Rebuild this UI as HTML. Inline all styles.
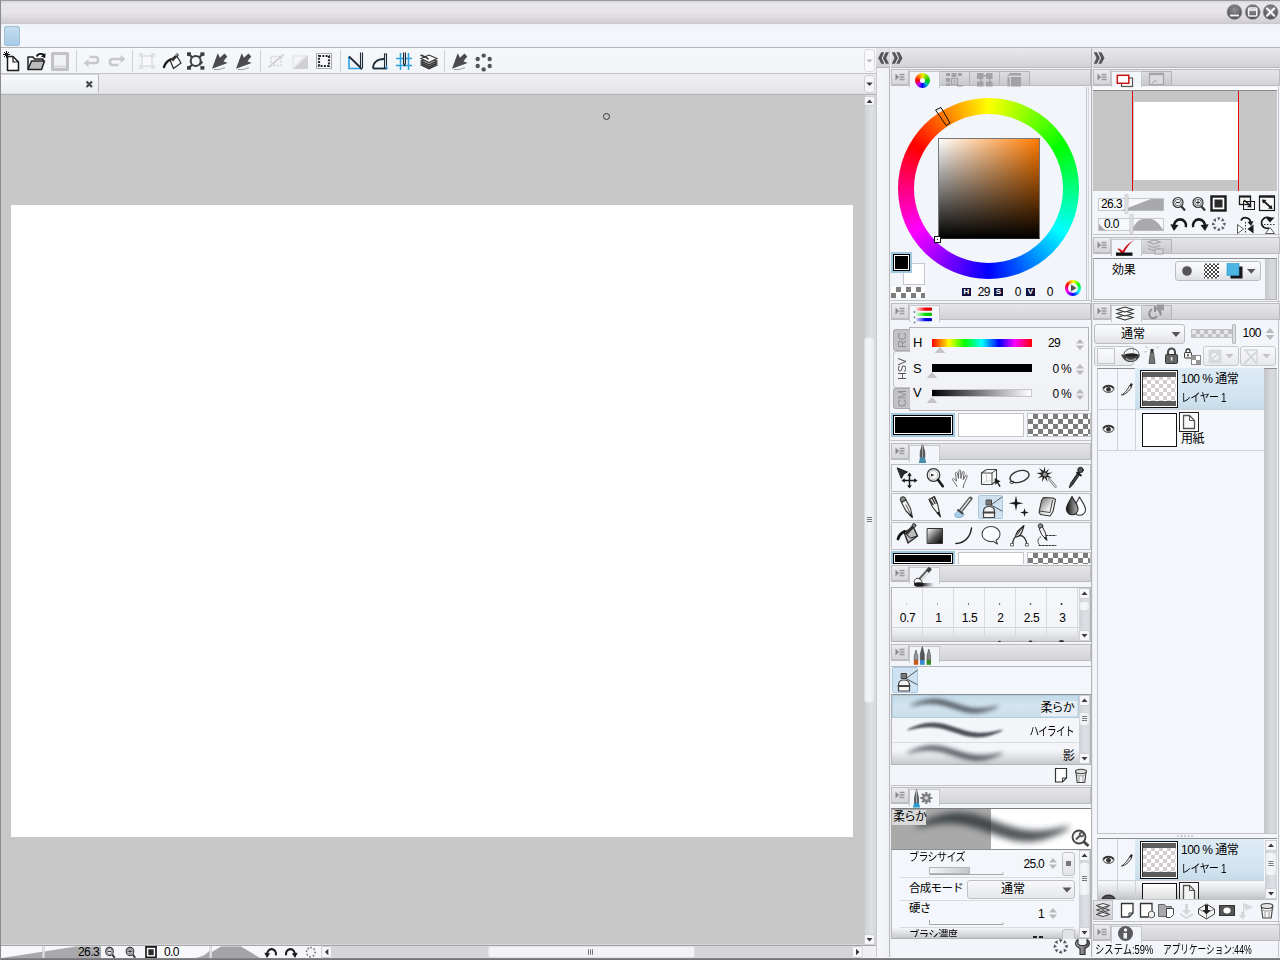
<!DOCTYPE html>
<html lang="ja">
<head>
<meta charset="utf-8">
<title>CLIP STUDIO PAINT</title>
<style>
*{box-sizing:border-box;margin:0;padding:0}
html,body{width:1280px;height:960px;overflow:hidden;background:#f2f5fa}
body{position:relative;font-family:"Liberation Sans","Noto Sans CJK JP",sans-serif;font-size:12px;color:#111;line-height:1}
.a{position:absolute}
#title{left:0;top:0;width:1280px;height:24px;background:linear-gradient(#d9d7db 0,#e9e7eb 3px,#e6e4e8 12px,#d2d0d4 21px,#c6c4c8 24px);border-top:1px solid #9a9a9e}
#menu{left:0;top:24px;width:1280px;height:23px;background:linear-gradient(#eef1f6,#f5f8fc 40%,#f1f4f9)}
#menuline{left:0;top:47px;width:1280px;height:1px;background:#b4b4b8}
#toolbar{left:0;top:48px;width:876px;height:25px;background:linear-gradient(#f6f8fb,#f1f4f8)}
#toolline{left:0;top:73px;width:876px;height:1px;background:#c4c4c8}
#tabrow{left:0;top:74px;width:876px;height:19px;background:linear-gradient(#eeeef1,#e6e6ea)}
#doctab{left:0;top:74px;width:99px;height:19px;background:linear-gradient(#f7f9fc,#e9ecf0);border-right:1px solid #bdbdc2;border-top:1px solid #d4d4d8}
#tabline{left:0;top:93px;width:876px;height:2px;background:linear-gradient(#f4f4f6,#9c9ca0)}
#canvas{left:1px;top:95px;width:864px;height:849px;background:#c8c8c8}
#paper{left:11px;top:205px;width:842px;height:632px;background:#fff}
#lborder{left:0;top:0;width:1px;height:960px;background:#8c8c90}
#vscroll{left:865px;top:95px;width:11px;height:849px;background:linear-gradient(90deg,#cfd4d9,#dde1e6 60%,#d4d8dd)}
#status{left:1px;top:944px;width:875px;height:13px;background:#d6d6da}
#bottomline{left:0;top:958px;width:1280px;height:2px;background:linear-gradient(#8a8a8e,#6e6e72)}
.dockhead{height:20px;top:48px;background:linear-gradient(#e9e8eb,#dcdbde 60%,#d2d1d4);border-bottom:1px solid #b9b9bd}
.tabbar{height:17px;background:linear-gradient(#e6e5e8,#d3d2d5);border:1px solid #bcbcc0}
.tab{background:#f2f5fa;border:1px solid #c9c9cd;border-bottom:none;margin-top:2px}
.itab{margin-top:1px;height:14px;background:linear-gradient(#dddce0,#c9c8cc);border:1px solid #b4b4b8;border-bottom:none}
.mbtn{height:16px;width:18px;background:linear-gradient(#ebeaed,#d6d5d8);border:1px solid #bdbdc1}
.panel{background:#f2f5fa}

.chk{background:conic-gradient(#7c7c7c 25%,#fff 0 50%,#7c7c7c 0 75%,#fff 0);background-size:10px 10px}
.hb{top:288px;width:9px;height:8px;background:#10103c;color:#fff;font-size:8px;font-weight:bold;line-height:8px;text-align:center}
.hv{top:286px;height:12px;font-size:12px;line-height:12px;text-align:right;letter-spacing:-0.500px;color:#000}

.vt{width:16px;writing-mode:vertical-rl;transform:rotate(180deg);font-size:11px;line-height:16px;text-align:center;letter-spacing:-0.300px}
.sl{left:913px;width:10px;font-size:13px;line-height:14px;color:#000}
.sv{font-size:12px;line-height:14px;text-align:right;color:#000;letter-spacing:-0.700px}
.sw{background:#000;border:2px solid #9fc7de;box-shadow:inset 0 0 0 1px #000,inset 0 0 0 2px #fff}
.tb{left:891px;width:200px;height:28px;background:#f3f6fa;border:1px solid #bebec2}

.sbb{width:11px;height:11px;background:#f6f7f9;border:1px solid #d0d0d4;border-radius:2px}
.bs{top:611px;width:31px;font-size:12px;line-height:14px;text-align:center;color:#000;letter-spacing:-0.400px}
.st{left:960px;width:114px;height:15px;font-size:12px;line-height:15px;text-align:right;color:#000;letter-spacing:-0.800px}
.pl{left:909px;font-size:11.500px;line-height:13px;color:#000;letter-spacing:-0.700px;white-space:nowrap}

.lt{font-size:12px;line-height:14px;color:#000;letter-spacing:-0.500px;white-space:nowrap}
.lchk{background-color:#fff;background-image:linear-gradient(45deg,#d3cdcd 25%,transparent 25%,transparent 75%,#d3cdcd 75%),linear-gradient(45deg,#d3cdcd 25%,transparent 25%,transparent 75%,#d3cdcd 75%);background-size:8px 8px;background-position:0 0,4px 4px}
.ochk{background-color:#e8e8ea;background-image:linear-gradient(45deg,#c2c2c5 25%,transparent 25%,transparent 75%,#c2c2c5 75%),linear-gradient(45deg,#c2c2c5 25%,transparent 25%,transparent 75%,#c2c2c5 75%);background-size:8px 8px;background-position:0 0,4px 4px;border:1px solid #c0c0c4}
.stx{top:943px;font-size:12px;line-height:14px;color:#000;white-space:nowrap;transform-origin:0 50%}
</style>
</head>
<body>
<!-- ===== window chrome ===== -->
<div id="title" class="a"></div>
<div id="menu" class="a"></div>
<div id="menuline" class="a"></div>
<div id="toolbar" class="a"></div>
<div id="toolline" class="a"></div>
<div id="tabrow" class="a"></div>
<div id="doctab" class="a"></div>
<div id="tabline" class="a"></div>
<div id="canvas" class="a"></div>
<div id="paper" class="a"></div>
<div id="vscroll" class="a"></div>
<div id="status" class="a"></div>

<!-- window buttons -->
<svg class="a" style="left:1224px;top:2px" width="56" height="22" viewBox="0 0 56 22">
<defs><radialGradient id="wb" cx="50%" cy="35%" r="65%"><stop offset="0" stop-color="#909094"/><stop offset="1" stop-color="#4e4e52"/></radialGradient></defs>
<circle cx="10.5" cy="10" r="7.6" fill="url(#wb)" stroke="#a8a8ac" stroke-width="0.8"/>
<circle cx="28.7" cy="10" r="7.6" fill="url(#wb)" stroke="#a8a8ac" stroke-width="0.8"/>
<circle cx="46.6" cy="10" r="7.6" fill="url(#wb)" stroke="#a8a8ac" stroke-width="0.8"/>
<path d="M6 13.5h9" stroke="#f4f4f6" stroke-width="1.8"/>
<rect x="24.6" y="6" width="8.2" height="8" rx="1" fill="none" stroke="#f4f4f6" stroke-width="1.6"/><path d="M25 8h7.5" stroke="#f4f4f6" stroke-width="1.6"/>
<path d="M43 6.5l7.2 7.2M50.2 6.5l-7.2 7.2" stroke="#f4f4f6" stroke-width="2.2" stroke-linecap="round"/>
</svg>
<!-- menu bar app box -->
<div class="a" style="left:4px;top:26px;width:16px;height:20px;border-radius:2px;background:linear-gradient(#c4dcef,#a9cbe6);border:1px solid #9fc0da"></div>
<!-- toolbar icons -->
<svg class="a" style="left:0;top:48px" width="500" height="26" viewBox="0 0 500 26">
<g fill="none" stroke-linejoin="round">
<!-- new -->
<path d="M7.5 8.5h5.5l5.5 5.5v8.5h-11z" fill="#fff" stroke="#1a1a1a" stroke-width="1.5"/><path d="M13 8.5v5.5h5.5" stroke="#1a1a1a" stroke-width="1.2"/>
<path d="M3 6.5h7M6.5 3v7M4 4l5 5M9 4l-5 5" stroke="#1a1a1a" stroke-width="1"/>
<!-- open -->
<path d="M28 21.5v-12.5h5l1.5 2h8.5v2.5" stroke="#222" stroke-width="1.5"/><path d="M28 21.5l3.5-8.5h13l-3 8.5z" fill="#bdbdbd" stroke="#222" stroke-width="1.5"/>
<path d="M36.5 8.5c1.5-3 5-3.5 7.500-1.500" stroke="#111" stroke-width="1.8"/><path d="M45.5 5l-.3 5-4.200-1.500z" fill="#111"/>
<!-- save (disabled) -->
<rect x="52.500" y="5.500" width="15" height="16" fill="#f0f2f5" stroke="#c2c2c4" stroke-width="3"/><path d="M54 18.500h12" stroke="#d8d8da" stroke-width="2"/>
<!-- sep -->
<path d="M76.500 2v22M132.500 2v22M260.500 2v22M340.500 2v22M444.500 2v22" stroke="#cfcfd3" stroke-width="1"/>
<!-- undo / redo disabled -->
<path d="M86 15h9.500c3.500 0 3.500-6 0-6h-6" stroke="#c9c9cc" stroke-width="2.600"/><path d="M83.500 15l5-4v8z" fill="#c9c9cc"/>
<path d="M122 11h-9.500c-3.500 0-3.500 6 0 6h6" stroke="#c9c9cc" stroke-width="2.600"/><path d="M125.500 11l-5-4v8z" fill="#c9c9cc"/>
<!-- transform disabled -->
<rect x="142" y="8" width="10" height="10" fill="#f8f9fb" stroke="#dcdcdf" stroke-width="1.500"/><g fill="#e0e0e3"><rect x="139" y="5" width="4" height="4"/><rect x="151" y="5" width="4" height="4"/><rect x="139" y="17" width="4" height="4"/><rect x="151" y="17" width="4" height="4"/></g>
<!-- fill bucket -->
<path d="M170 12l6.500-4.500 4.500 7.500-7.500 5.500z" fill="#fafbfc" stroke="#333" stroke-width="1.300"/><path d="M172 12.500l6-6.500" stroke="#333" stroke-width="2.600"/><path d="M175.500 8l2-2" stroke="#e8e8e8" stroke-width="1"/>
<path d="M170.500 11.500c-3 1.500-5.500 3.500-6.500 7.500" stroke="#1a1a1a" stroke-width="2.400" stroke-linecap="round"/>
<!-- expand -->
<circle cx="195.700" cy="13" r="5" stroke="#3e3e40" stroke-width="2"/><path d="M192 9.300l-3-3M199.400 9.300l3-3M192 16.700l-3 3M199.400 16.700l3-3" stroke="#3e3e40" stroke-width="2.200"/>
<g fill="#3e3e40" stroke="none"><rect x="187" y="4.300" width="4" height="3.600"/><rect x="200.400" y="4.300" width="4" height="3.600"/><rect x="187" y="18.100" width="4" height="3.600"/><rect x="200.400" y="18.100" width="4" height="3.600"/></g>
</g>
<!-- dart icons -->
<g id="dart" fill="#4c4c4e"><path d="M212 20.700l5.700-15.400 2.300 4.500 4.500-4.200 2.800 2.800-3.900 4.800 4.200 1.700z"/><path d="M214 21.500c4 .5 8-.5 11-2" stroke="#9a9a9c" stroke-width="1" fill="none"/></g>
<use href="#dart" x="24"/>
<use href="#dart" x="240"/>
<g fill="none">
<!-- deselect disabled -->
<rect x="271" y="8.500" width="10" height="9" stroke="#d2d2d5" stroke-width="1.400" stroke-dasharray="2 1.500"/><path d="M268.500 19.500l15-13" stroke="#d2d2d5" stroke-width="2"/>
<!-- invert disabled -->
<path d="M293 21h15v-14z" fill="#d0d0d3"/><path d="M293 8h14" stroke="#dcdcde" stroke-width="1"/><path d="M293 8v12" stroke="#dcdcde" stroke-width="1"/><path d="M294 19l12-11" stroke="#e6e6e8" stroke-width="1.500"/>
<!-- select all -->
<rect x="316.500" y="5.500" width="15" height="15" fill="#fafbfc" stroke="#aaa" stroke-width="1"/><rect x="319" y="8" width="10" height="10" stroke="#2a2a2c" stroke-width="2.200" stroke-dasharray="2 1.300"/>
<!-- ruler N -->
<path d="M349 8.500v12h13" stroke="#2aa0de" stroke-width="1.600"/><path d="M349 8.500l12.500 12" stroke="#1c2a3a" stroke-width="1.800"/><path d="M360.500 4.500v15l1 1.500 1-1.500v-15" stroke="#1c2a3a" stroke-width="1.100" fill="#e8e8ea"/>
<!-- ruler D -->
<path d="M373 20.500c0-6 4.500-9.500 11-9.500" stroke="#1c2a3a" stroke-width="1.800"/><path d="M373 20.500h14" stroke="#1c2a3a" stroke-width="1.800"/><path d="M384.500 6v13.500l1 1 1-1v-13.500z" stroke="#1c2a3a" stroke-width="1.100" fill="#e8e8ea"/><path d="M386 17l2.500 3.500h-3z" fill="#2aa0de"/>
<!-- grid -->
<path d="M396 10.500h16M396 17.500h16M400.500 5v17M408.500 5v17" stroke="#2aa0de" stroke-width="1.500"/><path d="M403.500 4.500v11l1 2 1-2v-11" stroke="#1c2a3a" stroke-width="1.100" fill="#d8d8da"/>
<!-- layers -->
<g stroke="#333" stroke-width="1.100"><path d="M421 17l8 4 8-4-8-3z" fill="#555"/><path d="M421 15l8 4 8-4-8-3z" fill="#777"/><path d="M421 13l8 4 8-4-8-3z" fill="#999"/><path d="M421 10.500l8 4 8-4-8-3.500z" fill="#fafafa"/><path d="M420.500 7l6 2.500 2 2" stroke-width="1.500"/></g>
</g>
<!-- dots -->
<g fill="#555557"><circle cx="483.700" cy="7.600" r="2.200"/><circle cx="489.700" cy="11" r="2.200"/><circle cx="489.700" cy="18" r="2.200"/><circle cx="483.700" cy="21.400" r="2.200"/><circle cx="477.700" cy="18" r="2.200"/><circle cx="477.700" cy="11" r="2.200"/></g>
</svg>
<!-- toolbar overflow / tab list / scroll buttons -->
<div class="a" style="left:864px;top:49px;width:11px;height:23px;background:#f8f9fb;border:1px solid #dcdce0;border-radius:3px"></div>
<svg class="a" style="left:864px;top:49px" width="11" height="23"><path d="M2.500 10.500h6l-3 3z" fill="#b4b4b8"/></svg>
<div class="a" style="left:864px;top:75px;width:11px;height:18px;background:#f4f5f8;border:1px solid #d0d0d4;border-radius:3px"></div>
<svg class="a" style="left:864px;top:75px" width="11" height="18"><path d="M2.300 7.500h6.400l-3.200 3.600z" fill="#3a3a3c"/></svg>
<div class="a" style="left:864px;top:96px;width:11px;height:10px;background:#f6f7f9;border:1px solid #d0d0d4;border-radius:2px"></div>
<svg class="a" style="left:864px;top:96px" width="11" height="10"><path d="M2.500 7h6l-3-3.400z" fill="#3a3a3c"/></svg>
<div class="a" style="left:864px;top:934px;width:11px;height:11px;background:#f6f7f9;border:1px solid #d0d0d4;border-radius:2px"></div>
<svg class="a" style="left:864px;top:934px" width="11" height="11"><path d="M2.500 4h6l-3 3.400z" fill="#3a3a3c"/></svg>
<div class="a" style="left:864px;top:337px;width:11px;height:366px;background:linear-gradient(90deg,#e9ecf0,#f3f5f8 50%,#e6e9ed);border:1px solid #d9dce0;border-radius:3px"></div>
<svg class="a" style="left:864px;top:514px" width="11" height="12"><path d="M3 3.500h5M3 5.500h5M3 7.500h5" stroke="#77777a" stroke-width="1"/></svg>
<!-- doc tab close -->
<svg class="a" style="left:84px;top:79px" width="11" height="11"><path d="M2.500 2.500l5.500 5.500M8 2.500l-5.500 5.500" stroke="#4a4a4c" stroke-width="2.200"/></svg>
<!-- canvas cursor -->
<svg class="a" style="left:601px;top:111px" width="11" height="11"><circle cx="5.500" cy="5.500" r="3" fill="none" stroke="#333" stroke-width="1"/></svg>

<!-- status bar -->
<div class="a" style="left:1px;top:945px;width:875px;height:1px;background:#a4a4a8"></div>
<div class="a" style="left:1px;top:946px;width:863px;height:12px;background:#f4f6f9"></div>
<svg class="a" style="left:0;top:946px" width="864" height="12" viewBox="0 0 864 11" preserveAspectRatio="none">
<rect x="2" y="0" width="99" height="11" fill="#f6f8fa"/>
<path d="M2 11L76 0.500H101V11z" fill="#a9a9ab"/>
<rect x="42.500" y="0" width="2" height="11" fill="#e4e6e9" stroke="#c4c4c8" stroke-width="0.500"/>
<rect x="161" y="0" width="49" height="11" fill="#f6f8fa"/>
<path d="M193 11C203 11 208 6 210 4v7z" fill="#a9a9ab"/>
<rect x="212" y="0" width="48" height="11" fill="#f6f8fa"/>
<path d="M212 11V5.500L221 0.500H241L260 11z" fill="#a4a4a6"/>
<rect x="209.800" y="0" width="2" height="11" fill="#e4e6e9" stroke="#c4c4c8" stroke-width="0.500"/>
<g fill="none" stroke="#333" stroke-width="1.100"><circle cx="109.500" cy="5" r="3.800"/><circle cx="109.500" cy="5" r="2.600" stroke-width="0.600"/><path d="M107.800 5h3.400"/><path d="M112.300 8l2.500 2.800" stroke-width="1.800"/>
<circle cx="130" cy="5" r="3.800"/><circle cx="130" cy="5" r="2.600" stroke-width="0.600"/><path d="M128.200 5h3.600M130 3.200v3.600"/><path d="M132.800 8l2.500 2.800" stroke-width="1.800"/></g>
<rect x="146" y="0.800" width="10" height="9.700" fill="#fff" stroke="#1a1a1a" stroke-width="1.700"/><rect x="148.300" y="3" width="5.400" height="5.400" fill="#2a2a2c"/>
<g fill="none" stroke="#1a1a1a" stroke-width="2"><path d="M267.300 8.200A4.400 4.400 0 1 1 275.800 8.600"/><path d="M294.700 8.200A4.400 4.400 0 1 0 286.200 8.600"/></g>
<path d="M264.300 6.300l5.800 .5-3.200 4.200z" fill="#1a1a1a"/><path d="M297.700 6.300l-5.800 .5 3.200 4.200z" fill="#1a1a1a"/>
<g fill="#777"><circle cx="311" cy="1.500" r=".9"/><circle cx="314.200" cy="3" r=".9"/><circle cx="315.200" cy="6" r=".9"/><circle cx="313.500" cy="9" r=".9"/><circle cx="310" cy="9.800" r=".9"/><circle cx="307.300" cy="8" r=".9"/><circle cx="306.600" cy="4.800" r=".9"/><circle cx="308.200" cy="2.300" r=".9"/></g>
<rect x="332" y="0" width="520" height="11" fill="#d5d5d9"/>
<rect x="321.500" y="0.500" width="10" height="10" rx="2" fill="#f6f7f9" stroke="#d0d0d4"/><path d="M328.300 2.500v6l-3.400-3z" fill="#3a3a3c"/>
<rect x="852.500" y="0.500" width="10" height="10" rx="2" fill="#f6f7f9" stroke="#d0d0d4"/><path d="M856 2.500v6l3.400-3z" fill="#3a3a3c"/>
<rect x="488.500" y="0.500" width="206" height="10" rx="2.500" fill="#f1f3f6" stroke="#dfe1e4"/>
<path d="M588.500 3v5M590.500 3v5M592.500 3v5" stroke="#77777a" stroke-width="1"/>
</svg>
<div class="a" style="left:60px;top:946px;width:39px;height:11px;font-size:12px;letter-spacing:-0.600px;text-align:right;line-height:12px;color:#000">26.3</div>
<div class="a" style="left:164px;top:946px;width:30px;height:11px;font-size:12px;letter-spacing:-0.600px;line-height:12px;color:#000">0.0</div>
<div class="a" style="left:864px;top:946px;width:12px;height:12px;background:#eef0f4"></div>


<!-- dock frame -->
<div class="a" style="left:876px;top:48px;width:404px;height:909px;background:#f2f5fa"></div>
<div class="a dockhead" style="left:876px;width:404px"></div>
<div class="a" style="left:876px;top:68px;width:1px;height:889px;background:#c9c9cd"></div>
<div class="a" style="left:877px;top:68px;width:12px;height:889px;background:linear-gradient(90deg,#f4f6fa,#eef0f5)"></div>
<div class="a" style="left:889px;top:68px;width:1px;height:889px;background:#b9b9bd"></div><div class="a" style="left:889px;top:48px;width:1px;height:19px;background:#d0d0d4"></div>
<div class="a" style="left:890px;top:48px;width:1px;height:909px;background:#eeeff3"></div>
<div class="a" style="left:1091px;top:48px;width:1px;height:909px;background:#b4b4b8"></div>
<div class="a" style="left:1092px;top:48px;width:1px;height:909px;background:#e8e9ed"></div>
<svg class="a" style="left:876px;top:48px" width="404" height="20" viewBox="0 0 404 20">
<g fill="#555558" transform="translate(0 1) scale(1 .9)"><path d="M5.300 3.500h3l-2.700 6.500 2.700 6.500h-3l-3.100-6.500z"/><path d="M9.900 3.500h3l-2.700 6.500 2.700 6.500h-3l-3.100-6.500z"/>
<path d="M15.800 3.500h3l3.100 6.500-3.100 6.500h-3l2.700-6.500z"/><path d="M20.400 3.500h3l3.100 6.500-3.100 6.500h-3l2.700-6.500z"/>
<path d="M217.800 3.500h3l3.100 6.500-3.100 6.500h-3l2.700-6.500z"/><path d="M222.400 3.500h3l3.100 6.500-3.100 6.500h-3l2.700-6.500z"/></g>
</svg>

<!-- ===== middle column ===== -->
<!-- color wheel panel --><div class="a tabbar" style="left:891px;top:69px;width:200px"></div><div class="a mbtn" style="left:891px;top:69px"></div><svg class="a" style="left:891px;top:69px" width="18" height="17"><path d="M4.500 4.500v7l3.500-3.500z" fill="#8a8a8e"/><path d="M8.500 5.500h5M8.500 8h5M8.500 10.500h5" stroke="#9a9a9e" stroke-width="1.300"/></svg><div class="a itab" style="left:939px;top:70px;width:31px"></div><div class="a itab" style="left:969px;top:70px;width:31px"></div><div class="a itab" style="left:999px;top:70px;width:31px"></div><div class="a tab" style="left:909px;top:69px;width:31px;height:17px"></div>
<div class="a" style="left:1086px;top:87px;width:1px;height:213px;background:#c4c4c8"></div>
<div class="a" style="left:1088px;top:87px;width:1px;height:213px;background:#d4d4d8"></div>
<div class="a" style="left:891px;top:300px;width:200px;height:1px;background:#c2c2c6"></div>
<div class="a" style="left:898px;top:98px;width:181px;height:181px;border-radius:50%;background:conic-gradient(from -60deg,#f00,#ff0,#0f0,#0ff,#00f,#f0f,#f00)"></div>
<div class="a" style="left:914px;top:114px;width:149px;height:149px;border-radius:50%;background:#f2f5fa"></div>
<div class="a" style="left:938px;top:138px;width:102px;height:101px;background:linear-gradient(#0000,#000),linear-gradient(90deg,#fff,#ff7b00);border:1px solid #777;border-bottom-color:#222"></div>
<svg class="a" style="left:930px;top:100px" width="30" height="30"><path d="M5.600 10l5.400-2.500 9 15.500-3.800 2.600z" fill="none" stroke="#111" stroke-width="1"/></svg>
<div class="a" style="left:934px;top:236px;width:7px;height:7px;background:#fff;border:1px solid #111"></div>
<div class="a" style="left:937px;top:239px;width:1px;height:1px;background:#111"></div>
<!-- fg/bg -->
<div class="a" style="left:903px;top:263px;width:22px;height:22px;background:#fff;border:1px solid #c8c8cc"></div>
<div class="a" style="left:891px;top:252px;width:21px;height:21px;background:#000;border:2px solid #9fc7de;box-shadow:inset 0 0 0 1px #000,inset 0 0 0 2px #fff"></div>
<div class="a chk" style="left:891px;top:287px;width:34px;height:11px;background-size:10px 11px"></div>
<!-- HSV readout -->
<div class="a hb" style="left:962px">H</div><div class="a hv" style="left:972px;width:18px">29</div>
<div class="a hb" style="left:994px">S</div><div class="a hv" style="left:1004px;width:17px">0</div>
<div class="a hb" style="left:1026px">V</div><div class="a hv" style="left:1036px;width:17px">0</div>
<div class="a" style="left:1065px;top:280px;width:16px;height:16px;border-radius:50%;background:conic-gradient(from -60deg,#f00,#ff0,#0f0,#0ff,#00f,#f0f,#f00)"></div>
<div class="a" style="left:1068px;top:283px;width:10px;height:10px;border-radius:50%;background:#f6f7fa"></div>
<svg class="a" style="left:1065px;top:280px" width="16" height="16"><path d="M6 4.500v7l5.500-3.500z" fill="#555"/></svg>

<!-- color slider panel --><div class="a tabbar" style="left:891px;top:303px;width:200px"></div><div class="a mbtn" style="left:891px;top:303px"></div><svg class="a" style="left:891px;top:303px" width="18" height="17"><path d="M4.500 4.500v7l3.500-3.500z" fill="#8a8a8e"/><path d="M8.500 5.500h5M8.500 8h5M8.500 10.500h5" stroke="#9a9a9e" stroke-width="1.300"/></svg><div class="a tab" style="left:909px;top:303px;width:31px;height:17px"></div>
<div class="a" style="left:909px;top:327px;width:180px;height:84px;background:linear-gradient(#f4f6fa,#f0f1f5);border:1px solid #b4b4b8"></div>
<div class="a" style="left:893px;top:329px;width:17px;height:22px;background:#c3c3c7;border:1px solid #aaaaae;border-right:none;border-radius:3px 0 0 3px"></div>
<div class="a" style="left:893px;top:388px;width:17px;height:21px;background:#c3c3c7;border:1px solid #aaaaae;border-right:none;border-radius:3px 0 0 3px"></div>
<div class="a" style="left:893px;top:351px;width:17px;height:37px;background:#f1f3f7;border:1px solid #c4c4c8;border-right:none;border-radius:3px 0 0 3px"></div>
<div class="a vt" style="left:894px;top:329px;height:22px;color:#8c8c90">RC</div>
<div class="a vt" style="left:894px;top:351px;height:37px;color:#555">HSV</div>
<div class="a vt" style="left:894px;top:388px;height:21px;color:#8c8c90">CM</div>
<div class="a sl" style="top:336px">H</div><div class="a sl" style="top:362px">S</div><div class="a sl" style="top:386px">V</div>
<div class="a" style="left:932px;top:339px;width:100px;height:8px;background:linear-gradient(90deg,#f00,#ff0 17%,#0f0 33%,#0ff 50%,#00f 67%,#f0f 83%,#f00)"></div>
<div class="a" style="left:932px;top:364px;width:100px;height:8px;background:#000"></div>
<div class="a" style="left:932px;top:389px;width:100px;height:8px;background:linear-gradient(90deg,#000,#fff);border:1px solid #c8c8cc;border-left:none"></div>
<svg class="a" style="left:920px;top:330px" width="170" height="80"><g fill="#c6c6ca" stroke="#b4b4b8" stroke-width=".6"><path d="M15.500 22.500l4.500-5 4.500 5zM7.500 47.500l4.500-5 4.500 5zM7.500 72.500l4.500-5 4.500 5z"/></g>
<g fill="#b9b9bd"><path d="M156 13.500h8l-4-4.500zM156 15.500h8l-4 4.500zM156 38.500h8l-4-4.500zM156 40.500h8l-4 4.500zM156 63.500h8l-4-4.500zM156 65.500h8l-4 4.500z"/></g></svg>
<div class="a sv" style="top:336px;width:40px;left:1020px">29</div>
<div class="a sv" style="top:362px;width:50px;left:1021px">0 %</div>
<div class="a sv" style="top:387px;width:50px;left:1021px">0 %</div>
<div class="a sw" style="left:891px;top:413px;width:64px;height:24px"></div>
<div class="a" style="left:958px;top:413px;width:66px;height:24px;background:#fff;border:1px solid #c4c4c8"></div>
<div class="a chk" style="left:1027px;top:413px;width:64px;height:24px;border:1px solid #c4c4c8"></div>
<div class="a" style="left:891px;top:440px;width:200px;height:1px;background:#c2c2c6"></div>
<!-- tool panel --><div class="a tabbar" style="left:891px;top:443px;width:200px"></div><div class="a mbtn" style="left:891px;top:443px"></div><svg class="a" style="left:891px;top:443px" width="18" height="17"><path d="M4.500 4.500v7l3.500-3.500z" fill="#8a8a8e"/><path d="M8.500 5.500h5M8.500 8h5M8.500 10.500h5" stroke="#9a9a9e" stroke-width="1.300"/></svg><div class="a tab" style="left:909px;top:443px;width:31px;height:17px"></div>
<div class="a tb" style="top:464px"></div><div class="a tb" style="top:493px"></div><div class="a tb" style="top:522px"></div>
<div class="a" style="left:978px;top:495px;width:25px;height:24px;background:#cfe2f1;border:1px solid #a9c9e2;border-radius:2px"></div>
<div class="a sw" style="left:891px;top:551px;width:64px;height:13px;border-bottom:none"></div>
<div class="a" style="left:958px;top:552px;width:66px;height:12px;background:#fff;border:1px solid #c4c4c8;border-bottom:none"></div>
<div class="a chk" style="left:1027px;top:552px;width:64px;height:12px;border:1px solid #c4c4c8;border-bottom:none"></div>


<!-- tool icons -->
<svg class="a" style="left:891px;top:464px" width="200" height="86" viewBox="0 0 200 86">
<defs>
<linearGradient id="gd" x1="0" y1="0" x2="1" y2="1"><stop offset="0" stop-color="#fff"/><stop offset=".55" stop-color="#555"/><stop offset="1" stop-color="#000"/></linearGradient>
<linearGradient id="ge" x1="0" y1="0" x2="1" y2="1"><stop offset="0" stop-color="#666"/><stop offset=".6" stop-color="#eee"/><stop offset="1" stop-color="#fff"/></linearGradient>
<linearGradient id="gw" x1="0" y1="0" x2="1" y2="0"><stop offset="0" stop-color="#111"/><stop offset="1" stop-color="#bbb"/></linearGradient>
</defs>
<g fill="none" stroke-linejoin="round" stroke-linecap="round">
<!-- r1: move -->
<path d="M6.500 4l10 4-3.800 2.200-2.200 4z" fill="#2a2a2c" stroke="#1a1a1a" stroke-width="1"/>
<path d="M18.500 10.500v12M12.500 16.500h12" stroke="#1a1a1a" stroke-width="1.500"/>
<path d="M18.500 8.500l-2.300 3.300h4.600zM18.500 24.500l-2.300-3.300h4.600zM26.500 16.500l-3.300-2.300v4.600zM10.500 16.500l3.300-2.300v4.600z" fill="#1a1a1a"/>
<!-- magnifier -->
<circle cx="42.500" cy="11" r="6.300" stroke="#333" stroke-width="1.200" fill="#f8f9fb"/><circle cx="42.500" cy="11" r="4.400" stroke="#999" stroke-width=".7"/>
<path d="M47 15.800l4.800 6.400" stroke="#1a1a1a" stroke-width="2.600"/><path d="M43.500 11l-3.500-1.200v2.600z" fill="#222"/>
<!-- hand -->
<path d="M66 22.500c-1-3-3.500-4.500-4.500-7c0-1 1.200-1.300 2-.5l2 2.300l-1-8c0-1.200 1.600-1.300 1.900-.1l1.100 5.300l.3-7.500c.1-1.200 1.800-1.200 1.900 0l.2 7.500l1.500-6.300c.3-1.100 1.900-.8 1.800.4l-1 7l2.400-4c.6-1 2-.3 1.600.8c-1.200 3-2.200 5.500-3.200 7.500l-.8 3.600" stroke="#666" stroke-width="1" fill="#fbfcfd"/>
<!-- cube -->
<path d="M90.500 9l5-3.500h10v11l-4.500 4h-10.500z" fill="#fafbfc" stroke="#444" stroke-width="1.100"/><path d="M90.500 9h10.500v11.500M101 9l4.500-3.500" stroke="#444" stroke-width="1"/><path d="M95.500 5.500v11.500h10M95.500 17l-5 3.500" stroke="#bbb" stroke-width=".7"/>
<path d="M103.500 14l1 7 1.600-2 2.400 4 1.200-.8-2.400-4 2.400-.6z" fill="#1a1a1a"/>
<!-- lasso -->
<ellipse cx="128.500" cy="12.500" rx="9.800" ry="5.600" transform="rotate(-17 128.500 12.500)" stroke="#333" stroke-width="1.400"/><path d="M120 16.500c-1.500 1-1.500 2.800.5 3s3-1 2-2.300" stroke="#333" stroke-width="1"/>
<!-- wand -->
<path d="M158 15l6.500 7.500" stroke="#888" stroke-width="2.600"/><path d="M158 15l6.500 7.500" stroke="#eee" stroke-width="1"/>
<path d="M153.500 2.500l1 5.500 3.500-3.500-2 4.500 5.500-.5-5 2.500 4.500 3-5.500-1 1 5-3-4.500-2.500 4.500.5-5.500-5 2 4-3.500-5-2 5.500-.5-3-4.500 4.500 3z" fill="#222"/><circle cx="153.800" cy="10.500" r="2" fill="#999"/>
<!-- eyedropper -->
<path d="M178.500 23.500l1-4 7.500-11 2 1.500-7.500 11z" fill="#444" stroke="#1a1a1a" stroke-width="1"/><circle cx="189.500" cy="6" r="2.700" fill="#555" stroke="#1a1a1a" stroke-width="1"/><path d="M186 8.500l4 3" stroke="#1a1a1a" stroke-width="1.800"/>
<!-- r2: pen -->
<circle cx="12" cy="35.500" r="2.800" fill="#888" stroke="#333" stroke-width="1"/><path d="M10.500 38.500l4.500-2.500 4.500 8.500 2 9-6.500-6.500z" fill="#f4f4f4" stroke="#333" stroke-width="1.100"/><path d="M15 41l6 12" stroke="#333" stroke-width=".8"/><path d="M19.500 49.500l2 4.500-3.500-3z" fill="#111"/>
<!-- pencil -->
<path d="M38 35.500l5.500-3 3 7.500 3 13-8-10z" fill="#f8f8f8" stroke="#333" stroke-width="1.100"/><path d="M38.500 35.500l3.500 5M41 34l3 5.500M43 33l3 6" stroke="#333" stroke-width="1.400"/><path d="M47.500 47.500l2 5.500-4-4z" fill="#111"/>
<!-- brush -->
<path d="M79.500 34.500l-9.500 12" stroke="#555" stroke-width="4"/><path d="M79 35l-9 11.500" stroke="#ddd" stroke-width="1.500"/>
<path d="M66.500 47.500c-2 1-3.500 3-2.500 5c2 1.500 6 1.500 8.500-.5c1-1.500-.5-3-1.500-4.500z" fill="#a8cce6" stroke="#7aa8cc" stroke-width=".8"/><path d="M67 46l4.500 3.500" stroke="#444" stroke-width="2"/>
<!-- airbrush --><g id="airb"><path d="M100 41l11-8M100 41l11 6" stroke="#555" stroke-width="1"/>
<rect x="95.500" y="36" width="5" height="5" fill="#777" stroke="#444" stroke-width="1"/><path d="M92.500 53.500v-6c0-3 2-5 5.500-5s5.500 2 5.500 5v6z" fill="#f4f4f4" stroke="#444" stroke-width="1.200"/><path d="M92.500 48.500h11" stroke="#444" stroke-width="1.800"/></g>
<!-- sparkle -->
<path d="M125 31.500l1.300 6.500 6 1.300-6 1.300-1.300 6.500-1.300-6.500-6-1.300 6-1.300z" fill="#1a1a1a"/><path d="M133.500 44l.9 3.600 3.600.9-3.600.9-.9 3.600-.9-3.600-3.600-.9 3.600-.9z" fill="#1a1a1a"/>
<!-- eraser -->
<path d="M152.500 33.500l9.500.5 2.500 1.500-2.500 12-3 4.500-9.500-1.500-1.500-2 2.500-12z" fill="url(#ge)" stroke="#333" stroke-width="1.100"/><path d="M148.500 47l10.500 1.500 2.500-12" stroke="#333" stroke-width=".9"/>
<!-- drops -->
<path d="M188.500 33c2.500 5 6 8.500 6 12.500a5.800 5.800 0 0 1-11.600 0c0-4 3.100-7.500 5.600-12.500z" fill="#fbfcfd" stroke="#333" stroke-width="1.100"/>
<path d="M181 32.500c2.500 5 6 8.500 6 12.500a5.800 5.800 0 0 1-11.600 0c0-4 3.100-7.500 5.600-12.500z" fill="url(#gw)" stroke="#222" stroke-width="1.100"/>
<!-- r3: bucket -->
<path d="M13 68l9.500-4.500 4 8.500-9.500 7z" fill="#bbb" stroke="#222" stroke-width="1.300"/><path d="M13 68l6.500 6 7-2" stroke="#222" stroke-width="1"/>
<path d="M16 69l6.500-7" stroke="#333" stroke-width="3"/><circle cx="23" cy="61.500" r="1.800" fill="#999" stroke="#222" stroke-width="1"/>
<path d="M13.500 67.500c-3 1.500-5.500 3.500-6.500 7.500" stroke="#111" stroke-width="2.800"/>
<!-- gradient -->
<rect x="36.500" y="64.500" width="15" height="15" fill="url(#gd)" stroke="#333" stroke-width="1"/>
<!-- curve -->
<path d="M65 79.500c8.500-.5 14.500-6.500 15.500-15.500" stroke="#222" stroke-width="1.500"/>
<!-- balloon -->
<path d="M100 62.500c5 0 9 3.400 9 7.600c0 2.600-1.600 4.900-4 6.200l1.500 3.700-4.500-2.700c-.7.200-1.300.300-2 .300c-5 0-9-3.400-9-7.600s4-7.500 9-7.500z" fill="#fbfcfd" stroke="#444" stroke-width="1.100"/>
<!-- correct line -->
<path d="M121.500 80.500c.5-6 3-9 7-9s6.500 3 7.500 9" stroke="#333" stroke-width="1.300"/><rect x="120" y="79.500" width="2.500" height="2.500" fill="#fff" stroke="#333" stroke-width=".7"/><rect x="134.800" y="79.500" width="2.500" height="2.500" fill="#fff" stroke="#333" stroke-width=".7"/>
<path d="M124.500 72.500c.5-3 2-5.500 4.500-7.500l4-3.500-1.500 5c-1 3-3 5.500-5.500 6.500z" fill="#f0f0f0" stroke="#222" stroke-width="1.100"/><path d="M126 71l5.500-7.500" stroke="#222" stroke-width="1"/>
<!-- ruler pen -->
<circle cx="149.500" cy="62" r="2.300" fill="#888" stroke="#333" stroke-width=".9"/><path d="M148.500 64.500l3-1.500 3 6 1.500 7.500-5-5.500z" fill="#f0f0f0" stroke="#333" stroke-width="1"/><path d="M154.500 72.500l1.500 4-3-2.500z" fill="#111"/>
<path d="M155 71.500h10M148 81.500h17" stroke="#333" stroke-width="1" stroke-dasharray="2 1.300"/><path d="M149.500 73c-3 1.500-3.500 6-.5 8" stroke="#333" stroke-width="1" stroke-dasharray="2 1.300"/>
</g></svg>
<!-- brush size panel --><div class="a tabbar" style="left:891px;top:565px;width:200px"></div><div class="a mbtn" style="left:891px;top:565px"></div><svg class="a" style="left:891px;top:565px" width="18" height="17"><path d="M4.500 4.500v7l3.500-3.500z" fill="#8a8a8e"/><path d="M8.500 5.500h5M8.500 8h5M8.500 10.500h5" stroke="#9a9a9e" stroke-width="1.300"/></svg><div class="a tab" style="left:909px;top:565px;width:31px;height:17px"></div><div class="a" style="left:891px;top:587px;width:200px;height:55px;background:linear-gradient(#f5f7fb 0,#f3f5f9 40px,#e4e5e8 47px,#c9cacd 55px);border:1px solid #b4b4b8"></div><div class="a" style="left:922px;top:588px;width:1px;height:53px;background:#d9dadf"></div><div class="a" style="left:953px;top:588px;width:1px;height:53px;background:#d9dadf"></div><div class="a" style="left:984px;top:588px;width:1px;height:53px;background:#d9dadf"></div><div class="a" style="left:1015px;top:588px;width:1px;height:53px;background:#d9dadf"></div><div class="a" style="left:1046px;top:588px;width:1px;height:53px;background:#d9dadf"></div><div class="a" style="left:1077px;top:588px;width:1px;height:53px;background:#d9dadf"></div><div class="a" style="left:892px;top:627px;width:187px;height:1px;background:#d4d5da"></div><div class="a bs" style="left:892px">0.7</div><div class="a bs" style="left:923px">1</div><div class="a bs" style="left:954px">1.5</div><div class="a bs" style="left:985px">2</div><div class="a bs" style="left:1016px">2.5</div><div class="a bs" style="left:1047px">3</div><svg class="a" style="left:891px;top:598px" width="190" height="44"><g fill="#333"><circle cx="15.500" cy="6" r=".45"/><circle cx="46.500" cy="6" r=".55"/><circle cx="77.500" cy="6" r=".65"/><circle cx="108.500" cy="6" r=".75"/><circle cx="139.500" cy="6" r=".85"/><circle cx="170.500" cy="6" r="1"/><ellipse cx="108.500" cy="43.500" rx="1.300" ry=".7"/><ellipse cx="139.500" cy="43.500" rx="1.800" ry="1"/><ellipse cx="170.500" cy="43.600" rx="2.600" ry="1.500"/></g></svg><div class="a" style="left:1079px;top:588px;width:11px;height:53px;background:linear-gradient(90deg,#cdd1d6,#dde0e5 60%,#d2d6db)"></div><div class="a sbb" style="left:1079px;top:588px"></div><svg class="a" style="left:1079px;top:588px" width="11" height="11"><path d="M2.500 7h6l-3-3.400z" fill="#3a3a3c"/></svg><div class="a sbb" style="left:1079px;top:630px"></div><svg class="a" style="left:1079px;top:630px" width="11" height="11"><path d="M2.500 4h6l-3 3.400z" fill="#3a3a3c"/></svg><div class="a" style="left:1079px;top:601px;width:11px;height:10px;background:linear-gradient(90deg,#eceff3,#f5f7fa 50%,#e8ebef);border:1px solid #d6d9dd;border-radius:3px"></div><!-- sub tool panel --><div class="a tabbar" style="left:891px;top:644px;width:200px"></div><div class="a mbtn" style="left:891px;top:644px"></div><svg class="a" style="left:891px;top:644px" width="18" height="17"><path d="M4.500 4.500v7l3.500-3.500z" fill="#8a8a8e"/><path d="M8.500 5.500h5M8.500 8h5M8.500 10.500h5" stroke="#9a9a9e" stroke-width="1.300"/></svg><div class="a tab" style="left:909px;top:644px;width:31px;height:17px"></div>
<div class="a" style="left:891px;top:666px;width:200px;height:1px;background:#b4b4b8"></div>
<div class="a" style="left:891px;top:667px;width:200px;height:27px;background:#f3f6fa"></div>
<div class="a" style="left:892px;top:667px;width:26px;height:26px;background:#cfe2f1;border:1px solid #a9c9e2;border-radius:2px"></div>
<svg class="a" style="left:892px;top:667px" width="26" height="26" viewBox="0 0 26 26"><g fill="none" stroke-linejoin="round" stroke-linecap="round" transform="translate(-86 -29.500)"><use href="#airb"/></g></svg>
<div class="a" style="left:891px;top:694px;width:200px;height:71px;border:1px solid #b4b4b8;border-top-color:#8e8e92;background:linear-gradient(#f4f6fa 0,#f3f5f9 55px,#dcdde0 63px,#c4c5c8 70px)"></div>
<div class="a" style="left:892px;top:695px;width:187px;height:23px;background:linear-gradient(#c3dae8,#d3e5f0 50%,#c9deeb);border:1px solid #b0cde0"></div>
<div class="a" style="left:892px;top:742px;width:187px;height:1px;background:#dcdde2"></div>
<svg class="a" style="left:892px;top:695px" width="187" height="69" viewBox="0 0 187 69">
<defs><filter id="bl" x="-10%" y="-60%" width="120%" height="220%"><feGaussianBlur stdDeviation="1.300"/></filter><filter id="bl3" x="-10%" y="-60%" width="120%" height="220%"><feGaussianBlur stdDeviation="1.900"/></filter><filter id="bl2" x="-10%" y="-60%" width="120%" height="220%"><feGaussianBlur stdDeviation="3.200"/></filter></defs>
<g fill="#30363c"><path filter="url(#bl3)" d="M18.0 10.7L20.2 9.4L22.4 8.5L24.7 7.6L26.9 6.8L29.1 6.0L31.4 5.4L33.6 4.9L35.8 4.5L38.0 4.2L40.2 4.1L42.5 4.0L44.7 4.1L46.9 4.3L49.1 4.6L51.4 5.1L53.6 5.6L55.8 6.2L58.1 6.8L60.3 7.5L62.5 8.2L64.7 8.9L67.0 9.6L69.2 10.3L71.4 11.0L73.6 11.6L75.8 12.1L78.1 12.5L80.3 12.9L82.5 13.1L84.8 13.3L87.0 13.3L89.2 13.3L91.4 13.1L93.6 12.9L95.9 12.5L98.1 12.2L100.3 11.7L102.5 11.3L104.8 10.9L107.0 10.7L107.0 11.3L104.8 12.6L102.5 13.5L100.3 14.4L98.1 15.2L95.9 16.0L93.6 16.6L91.4 17.1L89.2 17.5L87.0 17.8L84.8 17.9L82.5 18.0L80.3 17.9L78.1 17.7L75.8 17.4L73.6 16.9L71.4 16.4L69.2 15.8L67.0 15.2L64.7 14.5L62.5 13.8L60.3 13.1L58.1 12.4L55.8 11.7L53.6 11.0L51.4 10.4L49.1 9.9L46.9 9.5L44.7 9.1L42.5 8.9L40.2 8.7L38.0 8.7L35.8 8.7L33.6 8.9L31.4 9.1L29.1 9.5L26.9 9.8L24.7 10.3L22.4 10.7L20.2 11.1L18.0 11.3z" opacity=".8"/><path filter="url(#bl)" d="M15.0 34.7L17.4 33.4L19.8 32.3L22.2 31.4L24.6 30.5L27.0 29.8L29.4 29.1L31.8 28.6L34.2 28.1L36.6 27.8L39.0 27.7L41.4 27.6L43.8 27.7L46.2 28.0L48.6 28.3L51.0 28.8L53.4 29.3L55.8 30.0L58.2 30.7L60.6 31.4L63.0 32.2L65.4 33.0L67.8 33.8L70.2 34.5L72.6 35.2L75.0 35.9L77.4 36.4L79.8 36.9L82.2 37.3L84.6 37.5L87.0 37.7L89.4 37.7L91.8 37.6L94.2 37.5L96.6 37.2L99.0 36.8L101.4 36.4L103.8 35.9L106.2 35.4L108.6 34.9L111.0 34.7L111.0 35.3L108.6 36.6L106.2 37.7L103.8 38.6L101.4 39.5L99.0 40.2L96.6 40.9L94.2 41.4L91.8 41.9L89.4 42.2L87.0 42.3L84.6 42.4L82.2 42.3L79.8 42.0L77.4 41.7L75.0 41.2L72.6 40.7L70.2 40.0L67.8 39.3L65.4 38.6L63.0 37.8L60.6 37.0L58.2 36.2L55.8 35.5L53.4 34.8L51.0 34.1L48.6 33.6L46.2 33.1L43.8 32.7L41.4 32.5L39.0 32.3L36.6 32.3L34.2 32.4L31.8 32.5L29.4 32.8L27.0 33.2L24.6 33.6L22.2 34.1L19.8 34.6L17.4 35.1L15.0 35.3z" opacity=".85"/><path filter="url(#bl3)" d="M15.0 57.7L17.4 56.3L19.8 55.2L22.2 54.2L24.6 53.3L27.0 52.5L29.4 51.8L31.8 51.2L34.2 50.8L36.6 50.4L39.0 50.3L41.4 50.2L43.8 50.3L46.2 50.5L48.6 50.9L51.0 51.3L53.4 51.9L55.8 52.5L58.2 53.2L60.6 53.9L63.0 54.7L65.4 55.5L67.8 56.3L70.2 57.0L72.6 57.7L75.0 58.4L77.4 58.9L79.8 59.4L82.2 59.8L84.6 60.1L87.0 60.3L89.4 60.3L91.8 60.3L94.2 60.1L96.6 59.9L99.0 59.5L101.4 59.2L103.8 58.7L106.2 58.3L108.6 57.8L111.0 57.7L111.0 58.3L108.6 59.7L106.2 60.8L103.8 61.8L101.4 62.7L99.0 63.5L96.6 64.2L94.2 64.8L91.8 65.2L89.4 65.6L87.0 65.7L84.6 65.8L82.2 65.7L79.8 65.5L77.4 65.1L75.0 64.7L72.6 64.1L70.2 63.5L67.8 62.8L65.4 62.1L63.0 61.3L60.6 60.5L58.2 59.7L55.8 59.0L53.4 58.3L51.0 57.6L48.6 57.1L46.2 56.6L43.8 56.2L41.4 55.9L39.0 55.7L36.6 55.7L34.2 55.7L31.8 55.9L29.4 56.1L27.0 56.5L24.6 56.8L22.2 57.3L19.8 57.7L17.4 58.2L15.0 58.3z" opacity=".75"/></g></svg>
<div class="a" style="left:1041px;top:701px;width:36px;height:15px;background:#e7eef4"></div>
<div class="a st" style="top:701px">柔らか</div>
<div class="a st" style="top:725px;transform:scaleX(.8);transform-origin:100% 50%">ハイライト</div>
<div class="a st" style="top:749px">影</div>
<div class="a" style="left:1079px;top:695px;width:11px;height:69px;background:linear-gradient(90deg,#cdd1d6,#dde0e5 60%,#d2d6db)"></div><div class="a sbb" style="left:1079px;top:695px"></div><svg class="a" style="left:1079px;top:695px" width="11" height="11"><path d="M2.500 7h6l-3-3.400z" fill="#3a3a3c"/></svg><div class="a sbb" style="left:1079px;top:753px"></div><svg class="a" style="left:1079px;top:753px" width="11" height="11"><path d="M2.500 4h6l-3 3.400z" fill="#3a3a3c"/></svg><div class="a" style="left:1079px;top:712px;width:11px;height:14px;background:linear-gradient(90deg,#eceff3,#f5f7fa 50%,#e8ebef);border:1px solid #d6d9dd;border-radius:3px"></div><svg class="a" style="left:1079px;top:715px" width="11" height="8"><path d="M3 1.500h5M3 3.500h5M3 5.500h5" stroke="#77777a" stroke-width="1"/></svg>
<svg class="a" style="left:1050px;top:765px" width="42" height="21" viewBox="0 0 42 21"><path d="M5.500 3.500h11v9.500l-4 4h-7z" fill="#fff" stroke="#333" stroke-width="1.200"/><path d="M16.500 13h-4v4" fill="none" stroke="#333" stroke-width="1"/>
<path d="M26 7.500h10l-1.200 10h-7.600z" fill="#f4f4f4" stroke="#444" stroke-width="1.100"/><ellipse cx="31" cy="6.500" rx="5.500" ry="2.200" fill="#ddd" stroke="#444" stroke-width="1.100"/><path d="M27 10c2 1.200 6 1.200 8 0M29 11v6M33 11v6" stroke="#888" stroke-width=".8" fill="none"/></svg>
<div class="a" style="left:891px;top:785px;width:200px;height:1px;background:#c2c2c6"></div>
<!-- tool property panel --><div class="a tabbar" style="left:891px;top:787px;width:200px"></div><div class="a mbtn" style="left:891px;top:787px"></div><svg class="a" style="left:891px;top:787px" width="18" height="17"><path d="M4.500 4.500v7l3.500-3.500z" fill="#8a8a8e"/><path d="M8.500 5.500h5M8.500 8h5M8.500 10.500h5" stroke="#9a9a9e" stroke-width="1.300"/></svg><div class="a tab" style="left:909px;top:787px;width:31px;height:17px"></div>
<div class="a" style="left:891px;top:809px;width:100px;height:40px;background:#a9a9a9"></div>
<div class="a" style="left:991px;top:809px;width:100px;height:40px;background:#fff"></div>
<div class="a" style="left:891px;top:808px;width:200px;height:1px;background:#7e7e82"></div>
<svg class="a" style="left:891px;top:809px" width="200" height="40" viewBox="0 0 200 40"><path d="M24.0 17.7L27.1 15.3L30.2 13.6L33.3 12.0L36.4 10.5L39.5 9.2L42.6 8.0L45.7 6.9L48.8 5.9L51.9 5.1L55.0 4.4L58.1 3.9L61.2 3.5L64.3 3.3L67.4 3.3L70.5 3.4L73.6 3.7L76.7 4.1L79.8 4.6L82.9 5.3L86.0 6.1L89.1 7.0L92.2 8.0L95.3 9.0L98.4 10.1L101.5 11.2L104.6 12.3L107.7 13.5L110.8 14.6L113.9 15.7L117.0 16.7L120.1 17.6L123.2 18.5L126.3 19.3L129.4 20.0L132.5 20.5L135.6 21.0L138.7 21.3L141.8 21.5L144.9 21.6L148.0 21.5L151.1 21.4L154.2 21.1L157.3 20.7L160.4 20.3L163.5 19.8L166.6 19.2L169.7 18.6L172.8 18.1L175.9 17.6L179.0 17.7L179.0 18.3L175.9 20.7L172.8 22.4L169.7 24.0L166.6 25.5L163.5 26.8L160.4 28.0L157.3 29.1L154.2 30.1L151.1 30.9L148.0 31.6L144.9 32.1L141.8 32.5L138.7 32.7L135.6 32.7L132.5 32.6L129.4 32.3L126.3 31.9L123.2 31.4L120.1 30.7L117.0 29.9L113.9 29.0L110.8 28.0L107.7 27.0L104.6 25.9L101.5 24.8L98.4 23.7L95.3 22.5L92.2 21.4L89.1 20.3L86.0 19.3L82.9 18.4L79.8 17.5L76.7 16.7L73.6 16.0L70.5 15.5L67.4 15.0L64.3 14.7L61.2 14.5L58.1 14.4L55.0 14.5L51.9 14.6L48.8 14.9L45.7 15.3L42.6 15.7L39.5 16.2L36.4 16.8L33.3 17.4L30.2 17.9L27.1 18.4L24.0 18.3z" fill="#2a3034" opacity=".82" filter="url(#bl2)"/></svg>
<div class="a" style="left:892px;top:810px;width:34px;height:15px;background:#d9d9d9"></div>
<div class="a" style="left:893px;top:811px;font-size:12px;line-height:13px;color:#000;letter-spacing:-1px">柔らか</div>
<svg class="a" style="left:1070px;top:828px" width="20" height="20" viewBox="0 0 20 20"><circle cx="9" cy="9" r="6.500" fill="#f4f4f4" stroke="#444" stroke-width="1.800"/><path d="M13.500 13.500l5 4.500" stroke="#444" stroke-width="3"/><path d="M6 11.500l5-5" stroke="#555" stroke-width="2"/><circle cx="11.500" cy="6.500" r="2" fill="none" stroke="#555" stroke-width="1.300"/></svg>
<div class="a" style="left:891px;top:849px;width:200px;height:90px;border:1px solid #b4b4b8;border-top-color:#8e8e92;background:linear-gradient(#f3f6fa 0,#f3f6fa 78px,#dedfe2 83px,#c2c3c6 89px)"></div>
<div class="a" style="left:900px;top:877px;width:174px;height:1px;background:#d9dade"></div>
<div class="a" style="left:900px;top:900px;width:174px;height:1px;background:#d9dade"></div>
<div class="a" style="left:900px;top:927px;width:174px;height:1px;background:#d9dade"></div>
<div class="a pl" style="top:851px;transform:scaleX(.87);transform-origin:0 50%">ブラシサイズ</div>
<div class="a pl" style="top:882px">合成モード</div>
<div class="a pl" style="top:902px">硬さ</div>
<div class="a pl" style="top:929px;height:8px;overflow:hidden;transform:scaleX(.9);transform-origin:0 50%">ブラシ濃度</div>
<div class="a sv" style="left:1004px;top:857px;width:40px">25.0</div>
<div class="a sv" style="left:1004px;top:907px;width:40px">1</div>
<div class="a" style="left:929px;top:867px;width:41px;height:7px;background:linear-gradient(90deg,#f4f5f8,#c4c5c8);border:1px solid #b8b8bc"></div>
<svg class="a" style="left:925px;top:850px" width="155" height="90"><path d="M4.500 24.500h73.500v-2M4.500 70v4.500h73.500v-2" fill="none" stroke="#a4a4a8" stroke-width="1"/>
<g fill="#b9b9bd"><path d="M124 12.500h8l-4-4.500zM124 14.500h8l-4 4.500zM124 62.500h8l-4-4.500zM124 64.500h8l-4 4.500z"/></g></svg>
<div class="a" style="left:1062px;top:852px;width:13px;height:24px;background:linear-gradient(#f6f7f9,#e2e3e6);border:1px solid #c0c0c4;border-radius:3px"></div>
<div class="a" style="left:1066px;top:861px;width:5px;height:5px;background:#77777a"></div>
<div class="a" style="left:1033px;top:936px;width:4px;height:1.500px;background:#222"></div><div class="a" style="left:1039px;top:936px;width:4px;height:1.500px;background:#222"></div><div class="a" style="left:1062px;top:929px;width:13px;height:10px;background:#e2e3e6;border:1px solid #c0c0c4;border-bottom:none;border-radius:3px 3px 0 0"></div>
<div class="a" style="left:967px;top:880px;width:108px;height:19px;background:linear-gradient(#f7f8fa,#e6e7ea);border:1px solid #c0c0c4;border-radius:3px"></div>
<div class="a" style="left:967px;top:880px;width:92px;height:19px;font-size:12px;line-height:19px;text-align:center;color:#000">通常</div>
<svg class="a" style="left:1060px;top:880px" width="14" height="19"><path d="M2.500 7.500h9l-4.500 5z" fill="#58585c"/></svg>
<div class="a" style="left:1079px;top:850px;width:11px;height:88px;background:linear-gradient(90deg,#cdd1d6,#dde0e5 60%,#d2d6db)"></div><div class="a sbb" style="left:1079px;top:850px"></div><svg class="a" style="left:1079px;top:850px" width="11" height="11"><path d="M2.500 7h6l-3-3.400z" fill="#3a3a3c"/></svg><div class="a sbb" style="left:1079px;top:927px"></div><svg class="a" style="left:1079px;top:927px" width="11" height="11"><path d="M2.500 4h6l-3 3.400z" fill="#3a3a3c"/></svg><div class="a" style="left:1079px;top:862px;width:11px;height:34px;background:linear-gradient(90deg,#eceff3,#f5f7fa 50%,#e8ebef);border:1px solid #d6d9dd;border-radius:3px"></div><svg class="a" style="left:1079px;top:875px" width="11" height="8"><path d="M3 1.500h5M3 3.500h5M3 5.500h5" stroke="#77777a" stroke-width="1"/></svg>
<svg class="a" style="left:1050px;top:936px" width="42" height="21" viewBox="0 0 42 21">
<g fill="#6a6a6e" transform="translate(10.700 10.300) scale(1.050)" style="fill:#545458"><g id="sp"><path d="M-1.500-7l3.500.8-2.500 2.700z"/></g><use href="#sp" transform="rotate(45)"/><use href="#sp" transform="rotate(90)"/><use href="#sp" transform="rotate(135)"/><use href="#sp" transform="rotate(180)"/><use href="#sp" transform="rotate(225)"/><use href="#sp" transform="rotate(270)"/><use href="#sp" transform="rotate(315)"/></g>
<defs><linearGradient id="wr" x1="0" x2="1"><stop offset="0" stop-color="#b4b4b8"/><stop offset="1" stop-color="#58585c"/></linearGradient></defs>
<path d="M28 3.500c-2.800 1.500-3.300 5-1 7l3 2v6h5v-6l3-2c2.300-2 1.800-5.500-1-7v4.500l-2 1.500h-5l-2-1.500z" fill="url(#wr)" stroke="#303034" stroke-width="1.100" stroke-linejoin="round"/></svg>

<!-- MID4 -->
<!-- ===== right column ===== -->
<!-- navigator --><div class="a tabbar" style="left:1093px;top:69px;width:187px"></div><div class="a mbtn" style="left:1093px;top:69px"></div><svg class="a" style="left:1093px;top:69px" width="18" height="17"><path d="M4.500 4.500v7l3.500-3.500z" fill="#8a8a8e"/><path d="M8.500 5.500h5M8.500 8h5M8.500 10.500h5" stroke="#9a9a9e" stroke-width="1.300"/></svg><div class="a itab" style="left:1141px;top:70px;width:31px"></div><div class="a tab" style="left:1111px;top:69px;width:31px;height:17px"></div>
<div class="a" style="left:1093px;top:87px;width:184px;height:3px;background:#fafbfd"></div><div class="a" style="left:1093px;top:90px;width:184px;height:1px;background:#8a8a8e"></div>
<div class="a" style="left:1093px;top:91px;width:184px;height:100px;background:#c6c6c6"></div>
<div class="a" style="left:1134px;top:102px;width:104px;height:78px;background:#fff"></div>
<div class="a" style="left:1132px;top:91px;width:1px;height:100px;background:#e60a0a"></div>
<div class="a" style="left:1238px;top:91px;width:1px;height:100px;background:#e60a0a"></div>
<div class="a" style="left:1278px;top:87px;width:1px;height:870px;background:#c4c4c8"></div>
<svg class="a" style="left:1093px;top:192px" width="187" height="44" viewBox="0 0 187 44">
<rect x="5.500" y="6.500" width="65" height="12" fill="#f6f8fa" stroke="#c8c8cc"/>
<path d="M28 18.500L58 7H70.500V18.500z" fill="#a9a9ab"/>
<rect x="5.500" y="26.500" width="65" height="12" fill="#f6f8fa" stroke="#c8c8cc"/>
<path d="M6 27v5c3 3 5 6 8 6.500h-8zM38 38.500c3-4 6-11 12-11.500h8c5 .5 9 6 12.500 11.500z" fill="#a9a9ab"/>
<rect x="32" y="2.500" width="3" height="19" rx="1" fill="#e2e4e8" stroke="#bdbdc1" stroke-width=".8"/>
<rect x="37" y="22.500" width="3" height="19" rx="1" fill="#e2e4e8" stroke="#bdbdc1" stroke-width=".8"/>
<g fill="none" stroke="#333" stroke-width="1.200"><circle cx="85" cy="10.500" r="5"/><circle cx="85" cy="10.500" r="3.300" stroke-width=".7"/><path d="M83 10.500h4"/><path d="M88.500 14.500l3.500 4" stroke-width="2.200"/>
<circle cx="105" cy="10.500" r="5"/><circle cx="105" cy="10.500" r="3.300" stroke-width=".7"/><path d="M103 10.500h4M105 8.500v4"/><path d="M108.500 14.500l3.500 4" stroke-width="2.200"/></g>
<rect x="118.500" y="4.500" width="14" height="14" fill="#fff" stroke="#1a1a1a" stroke-width="2.400"/><rect x="121.500" y="7.500" width="8" height="8" fill="#2a2a2c"/>
<g fill="none" stroke="#1a1a1a"><rect x="146.500" y="4.500" width="11" height="8" stroke-width="1.300" fill="#f4f4f4"/><rect x="150.500" y="9.500" width="11" height="8" stroke-width="1"/><path d="M146 4.500h12" stroke-width="2"/><path d="M151 8l7 6" stroke-width="1.600"/>
<rect x="166.500" y="4.500" width="15" height="14" stroke-width="1.200" fill="#f8f8f8"/><path d="M166 4.500h16" stroke-width="2.400"/><path d="M170 8.500l8.500 7.500" stroke-width="1.800"/></g>
<path d="M158.500 15.500l-4.500-.5 3.500-3.500zM169 7.500l4.500.5-3.500 3.500zM179.500 17l-4.500-.5 3.500-3.500z" fill="#1a1a1a"/>
<g fill="none" stroke="#1a1a1a" stroke-width="2.600"><path d="M81.300 35A6 6 0 1 1 92.800 35.200"/><path d="M111.700 35A6 6 0 1 0 100.200 35.200"/></g>
<path d="M77.300 32.300l8.200 .7-4.500 6z" fill="#1a1a1a"/><path d="M115.700 32.300l-8.200 .7 4.500 6z" fill="#1a1a1a"/>
<g fill="#5a5a5e" transform="translate(125.800 32)"><use href="#sp"/><use href="#sp" transform="rotate(45)"/><use href="#sp" transform="rotate(90)"/><use href="#sp" transform="rotate(135)"/><use href="#sp" transform="rotate(180)"/><use href="#sp" transform="rotate(225)"/><use href="#sp" transform="rotate(270)"/><use href="#sp" transform="rotate(315)"/></g>
<g fill="none" stroke="#1a1a1a" stroke-width="1.800"><path d="M148 28.500a5 5 0 0 1 9.500 2"/><path d="M178 27a5.500 5.500 0 1 0 -2 9"/></g>
<path d="M160.500 29l-2.500 5-3.500-4z" fill="#1a1a1a"/><path d="M152.500 30v12" stroke="#333" stroke-width="1" stroke-dasharray="1.500 1.500"/><path d="M144.500 32.500v9l6-4.500z" fill="#fff" stroke="#333" stroke-width=".8"/><path d="M160.500 32.500v9l-6-4.500z" fill="#1a1a1a"/>
<path d="M171 32.500h11" stroke="#333" stroke-width="1" stroke-dasharray="1.500 1.500"/><path d="M172.500 25.500h9l-4.500 5z" fill="#1a1a1a"/><path d="M172.500 41.500h9l-4.500-6z" fill="#fff" stroke="#333" stroke-width=".8"/>
</svg>
<div class="a" style="left:1098px;top:198px;width:27px;font-size:12px;line-height:13px;letter-spacing:-0.600px;color:#000;text-align:center">26.3</div>
<div class="a" style="left:1098px;top:218px;width:27px;font-size:12px;line-height:13px;letter-spacing:-0.600px;color:#000;text-align:center">0.0</div>
<div class="a" style="left:1093px;top:234px;width:187px;height:1px;background:#c2c2c6"></div>
<!-- layer property --><div class="a tabbar" style="left:1093px;top:237px;width:187px"></div><div class="a mbtn" style="left:1093px;top:237px"></div><svg class="a" style="left:1093px;top:237px" width="18" height="17"><path d="M4.500 4.500v7l3.500-3.500z" fill="#8a8a8e"/><path d="M8.500 5.500h5M8.500 8h5M8.500 10.500h5" stroke="#9a9a9e" stroke-width="1.300"/></svg><div class="a itab" style="left:1141px;top:238px;width:31px"></div><div class="a tab" style="left:1111px;top:237px;width:31px;height:17px"></div>
<div class="a" style="left:1093px;top:258px;width:184px;height:42px;background:#f3f6fa;border:1px solid #b4b4b8;border-top-color:#8e8e92"></div>
<div class="a" style="left:1265px;top:259px;width:11px;height:40px;background:linear-gradient(90deg,#c4c6ca,#d8dadd 60%,#cfd1d5)"></div>
<div class="a" style="left:1112px;top:263px;font-size:12px;line-height:14px;color:#000;letter-spacing:-0.300px">効果</div>
<div class="a" style="left:1175px;top:261px;width:86px;height:20px;background:linear-gradient(#fafbfc,#f0f1f3 50%,#dedfe2);border:1px solid #bcbcc0;border-radius:3px"></div>
<svg class="a" style="left:1175px;top:261px" width="86" height="20" viewBox="0 0 86 20"><circle cx="12" cy="10" r="4.800" fill="#555558"/>
<rect x="29" y="2.500" width="15" height="15" fill="#fff"/><path d="M29 2.500h15v15h-15z" fill="url(#pc)"/>
<rect x="55.500" y="5.500" width="12" height="12" fill="#16161c"/><rect x="52" y="2.500" width="12" height="12" fill="#4db4e4" stroke="#2a90c4" stroke-width=".6"/><path d="M72 8h8.500l-4.250 4.800z" fill="#58585c"/>
<defs><pattern id="pc" width="4" height="4" patternUnits="userSpaceOnUse"><rect width="2" height="2" fill="#444"/><rect x="2" y="2" width="2" height="2" fill="#444"/></pattern></defs></svg>
<div class="a" style="left:1093px;top:301px;width:187px;height:1px;background:#c2c2c6"></div>
<!-- layer panel --><div class="a tabbar" style="left:1093px;top:303px;width:187px"></div><div class="a mbtn" style="left:1093px;top:303px"></div><svg class="a" style="left:1093px;top:303px" width="18" height="17"><path d="M4.500 4.500v7l3.500-3.500z" fill="#8a8a8e"/><path d="M8.500 5.500h5M8.500 8h5M8.500 10.500h5" stroke="#9a9a9e" stroke-width="1.300"/></svg><div class="a itab" style="left:1141px;top:304px;width:31px"></div><div class="a tab" style="left:1111px;top:303px;width:31px;height:17px"></div>
<div class="a" style="left:1094px;top:324px;width:91px;height:20px;background:linear-gradient(#fafbfc,#f1f2f4 50%,#e0e1e4);border:1px solid #bcbcc0;border-radius:3px"></div>
<div class="a" style="left:1094px;top:324px;width:78px;height:20px;font-size:12px;line-height:20px;text-align:center;color:#000">通常</div>
<svg class="a" style="left:1168px;top:324px" width="16" height="20"><path d="M3.500 8h9l-4.500 5z" fill="#58585c"/></svg>
<div class="a ochk" style="left:1191px;top:329px;width:42px;height:9px"></div>
<div class="a" style="left:1232px;top:324px;width:4px;height:20px;background:#dcdde0;border:1px solid #b8b8bc;border-radius:1px"></div>
<div class="a" style="left:1238px;top:326px;width:23px;font-size:12px;line-height:14px;letter-spacing:-0.500px;color:#000;text-align:right">100</div>
<svg class="a" style="left:1264px;top:324px" width="12" height="20"><path d="M1.500 9h9l-4.500-5zM1.500 11h9l-4.500 5z" fill="#b9b9bd"/></svg>
<div class="a" style="left:1094px;top:346px;width:40px;height:20px;background:linear-gradient(#f8f9fb,#e8e9ec);border:1px solid #c4c4c8;border-radius:3px"></div>
<div class="a" style="left:1097px;top:348px;width:18px;height:16px;background:linear-gradient(#fafbfc,#eceef1);border:1px solid #c4c4c8"></div>
<div class="a" style="left:1203px;top:346px;width:36px;height:20px;background:linear-gradient(#f8f9fb,#e8e9ec);border:1px solid #c8c8cc;border-radius:3px"></div>
<div class="a" style="left:1240px;top:346px;width:36px;height:20px;background:linear-gradient(#f8f9fb,#e8e9ec);border:1px solid #c8c8cc;border-radius:3px"></div>
<svg class="a" style="left:1093px;top:345px" width="187" height="22" viewBox="0 0 187 22">
<path d="M28 9.500h19c-1 5-5 7.500-9.500 7.500s-7-2-9.500-7.500z" fill="#444"/><path d="M31 9.500a7.500 6 0 0 1 15 0" fill="none" stroke="#555" stroke-width="1"/><ellipse cx="38.500" cy="10" rx="6.500" ry="1.800" fill="#222"/><path d="M33 13.500c2 2.500 8 2.500 10 0" stroke="#aaa" stroke-width="1.500" fill="none"/>
<path d="M57.500 7.500h3l1.500 11h-6z" fill="#777" stroke="#444" stroke-width=".8"/><rect x="57.500" y="4" width="3" height="3.500" fill="#333"/><path d="M55 3l-3-1.500M63 3l3-1.500M54 6.500l-3 .5" stroke="#bbb" stroke-width=".8"/>
<rect x="72.500" y="9.500" width="12" height="9" rx="1" fill="#666" stroke="#333" stroke-width="1"/><path d="M75 9.500v-2.500a3.500 3.500 0 0 1 7 0v2.500" fill="none" stroke="#444" stroke-width="2"/><rect x="77.800" y="12" width="1.600" height="3.600" fill="#eee"/>
<rect x="91.500" y="7.500" width="7" height="5.500" rx=".8" fill="#f4f4f4" stroke="#333" stroke-width="1"/><path d="M93 7.500v-1.500a2 2 0 0 1 4 0v1.500" fill="none" stroke="#333" stroke-width="1.300"/><rect x="94.300" y="9" width="1.400" height="2.400" fill="#333"/>
<rect x="98.500" y="10.500" width="9" height="9" fill="#fff" stroke="#888" stroke-width="1"/><rect x="99" y="11" width="4" height="4" fill="#999"/><rect x="103" y="15" width="4" height="4" fill="#999"/>
<rect x="115.500" y="4.500" width="13" height="14" fill="#d8d9dc"/><circle cx="122" cy="11.500" r="3.500" fill="#f2f3f5"/><path d="M119 14.500l6-6" stroke="#d0d1d4" stroke-width="1.500"/><path d="M132.500 9h8l-4 4.500z" fill="#c4c4c8"/>
<path d="M151 5h13v14" fill="none" stroke="#d4d5d8" stroke-width="1.300"/><path d="M151 19l13-13M153 6l10 12" stroke="#d0d1d4" stroke-width="1.600"/><path d="M169.500 9h8l-4 4.500z" fill="#c4c4c8"/>
</svg>
<div class="a" style="left:1097px;top:368px;width:180px;height:466px;background:#f3f6fa;border:1px solid #c4c4c8;border-top-color:#8e8e92;border-right:none"></div>
<div class="a" style="left:1264px;top:369px;width:13px;height:464px;background:linear-gradient(90deg,#c2c4c8,#d9dbde 60%,#d0d2d6)"></div>
<div class="a" style="left:1117px;top:369px;width:1px;height:82px;background:#d0d1d6"></div>
<div class="a" style="left:1135px;top:369px;width:1px;height:82px;background:#d0d1d6"></div>
<div class="a" style="left:1098px;top:409px;width:166px;height:1px;background:#d0d1d6"></div>
<div class="a" style="left:1098px;top:450px;width:166px;height:1px;background:#d0d1d6"></div>
<div class="a" style="left:1135px;top:368px;width:129px;height:41px;background:linear-gradient(#dcebf6,#d3e4f1 70%,#c6dbea)"></div><div class="a" style="left:1140px;top:370px;width:38px;height:38px;background:#fff;border:1px solid #111;box-shadow:inset 0 0 0 1px #fff,inset 0 0 0 2px #333"></div><div class="a lchk" style="left:1143px;top:372px;width:33px;height:34px"></div><div class="a" style="left:1143px;top:372px;width:33px;height:5px;background:#5c5c5c"></div><div class="a" style="left:1143px;top:401px;width:33px;height:5px;background:#5c5c5c"></div><div class="a lt" style="left:1181px;top:372px">100 % 通常</div><div class="a lt" style="left:1181px;top:391px;transform:scaleX(.823);transform-origin:0 50%">レイヤー 1</div><svg class="a" style="left:1099px;top:380px" width="36" height="18" viewBox="0 0 36 18"><path d="M4 9.500c2.500-4.300 8.500-4.300 11 0c-2.500 3.800-8.500 3.800-11 0z" fill="#f4f4f4" stroke="#333" stroke-width="1"/><circle cx="9.500" cy="9.300" r="2.400" fill="#333"/><path d="M4 8.300c2.500-3.800 8.500-3.800 11 0" fill="none" stroke="#333" stroke-width="1.400"/><path d="M22.500 15c2-1 6-5 8.200-9.500l2 1.300c-2.500 4.200-6.500 8-10.200 8.200z" fill="#f0f0f0" stroke="#333" stroke-width="1"/><path d="M30.500 5.500l1.500-2.500 1.800 1.300-1.300 2.500z" fill="#222"/></svg>
<div class="a" style="left:1142px;top:413px;width:35px;height:34px;background:#fff;border:1px solid #111"></div>
<svg class="a" style="left:1099px;top:420px" width="36" height="18" viewBox="0 0 36 18"><path d="M4 9.500c2.500-4.300 8.500-4.300 11 0c-2.500 3.800-8.500 3.800-11 0z" fill="#f4f4f4" stroke="#333" stroke-width="1"/><circle cx="9.500" cy="9.300" r="2.400" fill="#333"/><path d="M4 8.300c2.500-3.800 8.500-3.800 11 0" fill="none" stroke="#333" stroke-width="1.400"/></svg>
<svg class="a" style="left:1179px;top:412px" width="21" height="20" viewBox="0 0 21 20"><rect x=".5" y=".5" width="19" height="19" fill="#fff" stroke="#222" stroke-width="1"/><path d="M4.500 3.500h6l5 5v8h-11z" fill="#fafafa" stroke="#555" stroke-width="1.300"/><path d="M10.500 3.500v5h5" fill="none" stroke="#555" stroke-width="1"/></svg>
<div class="a lt" style="left:1181px;top:432px">用紙</div>
<!-- splitter -->
<svg class="a" style="left:1175px;top:834px" width="20" height="4"><g fill="#88888c"><circle cx="3" cy="2" r=".7"/><circle cx="6.500" cy="2" r=".7"/><circle cx="10" cy="2" r=".7"/><circle cx="13.500" cy="2" r=".7"/><circle cx="17" cy="2" r=".7"/></g></svg>
<div class="a" style="left:1097px;top:838px;width:180px;height:62px;border:1px solid #c4c4c8;border-top-color:#8e8e92;border-right:none;background:linear-gradient(#f3f6fa 0,#f3f6fa 44px,#e0e1e4 52px,#bfc0c3 61px)"></div>
<div class="a" style="left:1117px;top:839px;width:1px;height:60px;background:#d0d1d6"></div>
<div class="a" style="left:1135px;top:839px;width:1px;height:60px;background:#d0d1d6"></div>
<div class="a" style="left:1098px;top:880px;width:166px;height:1px;background:#d0d1d6"></div>
<div class="a" style="left:1135px;top:839px;width:129px;height:41px;background:linear-gradient(#dcebf6,#d3e4f1 70%,#c6dbea)"></div><div class="a" style="left:1140px;top:841px;width:38px;height:38px;background:#fff;border:1px solid #111;box-shadow:inset 0 0 0 1px #fff,inset 0 0 0 2px #333"></div><div class="a lchk" style="left:1143px;top:843px;width:33px;height:34px"></div><div class="a" style="left:1143px;top:843px;width:33px;height:5px;background:#5c5c5c"></div><div class="a" style="left:1143px;top:872px;width:33px;height:5px;background:#5c5c5c"></div><div class="a lt" style="left:1181px;top:843px">100 % 通常</div><div class="a lt" style="left:1181px;top:862px;transform:scaleX(.823);transform-origin:0 50%">レイヤー 1</div><svg class="a" style="left:1099px;top:851px" width="36" height="18" viewBox="0 0 36 18"><path d="M4 9.500c2.500-4.300 8.500-4.300 11 0c-2.500 3.800-8.500 3.800-11 0z" fill="#f4f4f4" stroke="#333" stroke-width="1"/><circle cx="9.500" cy="9.300" r="2.400" fill="#333"/><path d="M4 8.300c2.500-3.800 8.500-3.800 11 0" fill="none" stroke="#333" stroke-width="1.400"/><path d="M22.500 15c2-1 6-5 8.200-9.500l2 1.300c-2.500 4.200-6.500 8-10.200 8.200z" fill="#f0f0f0" stroke="#333" stroke-width="1"/><path d="M30.500 5.500l1.500-2.500 1.800 1.300-1.300 2.500z" fill="#222"/></svg>
<div class="a" style="left:1142px;top:883px;width:35px;height:16px;background:linear-gradient(#fff,#ddd);border:1px solid #111;border-bottom:none"></div>
<div class="a" style="left:1179px;top:882px;width:20px;height:17px;background:linear-gradient(#fff,#ddd);border:1px solid #222;border-bottom:none"></div>
<svg class="a" style="left:1179px;top:882px" width="21" height="17" viewBox="0 0 21 17"><path d="M4.500 17v-13.500h6l5 5v8.500" fill="#f4f4f4" stroke="#555" stroke-width="1.300"/><path d="M10.500 3.500v5h5" fill="none" stroke="#555" stroke-width="1"/></svg>
<svg class="a" style="left:1099px;top:893px" width="20" height="6" viewBox="0 0 20 6"><path d="M3 6c3-5 10-5 13 0z" fill="#555" stroke="#333" stroke-width="1.400"/></svg>
<div class="a" style="left:1265px;top:840px;width:12px;height:59px;background:linear-gradient(90deg,#cdd1d6,#dde0e5 60%,#d2d6db)"></div><div class="a sbb" style="left:1265px;top:840px;width:12px"></div><svg class="a" style="left:1265px;top:840px" width="12" height="11"><path d="M3.0 7h6l-3-3.400z" fill="#3a3a3c"/></svg><div class="a sbb" style="left:1265px;top:888px;width:12px"></div><svg class="a" style="left:1265px;top:888px" width="12" height="11"><path d="M3.0 4h6l-3 3.400z" fill="#3a3a3c"/></svg><div class="a" style="left:1265px;top:852px;width:12px;height:24px;background:linear-gradient(90deg,#eceff3,#f5f7fa 50%,#e8ebef);border:1px solid #d6d9dd;border-radius:3px"></div><svg class="a" style="left:1265px;top:860px" width="12" height="8"><path d="M3.5 1.500h5M3.5 3.500h5M3.5 5.500h5" stroke="#77777a" stroke-width="1"/></svg>
<!-- layer command bar -->
<div class="a" style="left:1093px;top:900px;width:20px;height:20px;background:linear-gradient(#e4e5e8,#d0d1d4);border:1px solid #c0c0c4"></div>
<svg class="a" style="left:1093px;top:900px" width="187" height="21" viewBox="0 0 187 21">
<g fill="none" stroke="#444" stroke-width="1"><path d="M3.500 5.500l6.500-2 6.500 2-6.500 2zM3.500 10l6.500-2 6.500 2-6.500 2zM3.500 14.500l6.500-2 6.500 2-6.500 2z" fill="#f0f0f0"/><path d="M3.500 5.500l13 9M16.500 5.500l-13 9" stroke-width=".8"/></g>
<path d="M28.500 3.500h11.500v9.500l-4 4h-7.500z" fill="#fff" stroke="#333" stroke-width="1.300"/><path d="M40 13h-4v4" fill="none" stroke="#333" stroke-width="1"/>
<path d="M47.500 3.500h11.500v9.500l-4 4h-7.500z" fill="#fff" stroke="#333" stroke-width="1.300"/><path d="M55.500 12.500l3-1.500 3 1.500v4l-3 1.500-3-1.500z" fill="#eee" stroke="#444" stroke-width=".9"/>
<path d="M65.500 4.500h6l1.500 2h5.500v10h-13z" fill="#a8a8ac" stroke="#666" stroke-width="1"/><path d="M73.500 8.500h7v6l-3 3h-4z" fill="#fff" stroke="#444" stroke-width="1"/>
<g fill="#d6d7da"><path d="M92 4h3v6h3l-4.500 5-4.500-5h3z"/><path d="M87 13l6.500 4 6.500-4v2l-6.500 4-6.500-4z"/></g>
<path d="M105.500 9l8-5 8 5v5l-8 5-8-5z" fill="#f4f4f4" stroke="#444" stroke-width="1"/><path d="M105.500 9l8 4 8-4M113.500 13v6" fill="none" stroke="#666" stroke-width=".8"/><path d="M112 5h3v5h2.500l-4 4.500-4-4.500h2.500z" fill="#222"/>
<rect x="126.500" y="5.500" width="15" height="10" fill="#555" stroke="#333" stroke-width="1"/><ellipse cx="134" cy="10.500" rx="3.600" ry="3" fill="#fff"/>
<g fill="#d6d7da"><path d="M151 3l9 4-7 3.500z"/><path d="M150 3.500h1.500v13h-1.500z"/><path d="M148 12h3v3h2.500l-4 4.500-4-4.500h2.500z"/></g>
<path d="M168.500 7.500h11l-1.300 10.500h-8.400z" fill="#f4f4f4" stroke="#444" stroke-width="1.100"/><ellipse cx="174" cy="6" rx="6" ry="2.500" fill="#e4e4e4" stroke="#444" stroke-width="1.100"/><path d="M169.500 10c2 1.400 7 1.400 9 0M172 11.500v6M176 11.500v6" stroke="#888" stroke-width=".8" fill="none"/>
</svg>
<div class="a" style="left:1093px;top:921px;width:187px;height:1px;background:#c2c2c6"></div>
<!-- info --><div class="a tabbar" style="left:1093px;top:924px;width:187px"></div><div class="a mbtn" style="left:1093px;top:924px"></div><svg class="a" style="left:1093px;top:924px" width="18" height="17"><path d="M4.500 4.500v7l3.500-3.500z" fill="#8a8a8e"/><path d="M8.500 5.500h5M8.500 8h5M8.500 10.500h5" stroke="#9a9a9e" stroke-width="1.300"/></svg><div class="a tab" style="left:1111px;top:924px;width:31px;height:17px"></div>
<svg class="a" style="left:1117px;top:925px" width="17" height="17" viewBox="0 0 17 17"><circle cx="8.500" cy="8.500" r="7.500" fill="#5a5a5e"/><circle cx="8.500" cy="5" r="1.700" fill="#f4f4f6"/><path d="M6.500 8h3.500v5.500h-3.500z" fill="#f4f4f6"/></svg>
<div class="a stx" style="left:1095px;transform:scaleX(.777)">システム:59%</div><div class="a stx" style="left:1163px;transform:scaleX(.72)">アプリケーション:44%</div>


<!-- tab icons -->
<div class="a" style="left:915px;top:73px;width:15px;height:15px;border-radius:50%;background:conic-gradient(#ee0,#0c0 25%,#0bb 37%,#00f 50%,#b0f 62%,#f00 75%,#f80 90%,#ee0)"></div>
<div class="a" style="left:920px;top:78px;width:5px;height:5px;border-radius:50%;background:#fff"></div>
<svg class="a" style="left:940px;top:70px" width="92" height="17" viewBox="0 0 92 17">
<g fill="#a2a2a6"><rect x="6" y="3" width="4" height="3"/><rect x="11.500" y="3" width="5" height="4"/><rect x="18" y="3" width="4" height="3"/><rect x="6" y="8" width="4" height="4"/><rect x="11.500" y="8.500" width="6" height="6" fill="none" stroke="#a2a2a6" stroke-width="1.200"/><rect x="13.500" y="10.500" width="2" height="2"/><rect x="6" y="13.500" width="4" height="2.500"/><rect x="17" y="15" width="6" height="1.500"/>
<rect x="37" y="3" width="6.500" height="6"/><rect x="46" y="3" width="6.500" height="6"/><rect x="37" y="11.500" width="6.500" height="5"/><rect x="46" y="11.500" width="6.500" height="5"/><rect x="43" y="5" width="4" height="1.500"/><rect x="40" y="9" width="1.500" height="3"/><rect x="49" y="9" width="1.500" height="3"/>
<path d="M67 6l3-3h11v2.500h-11z"/><rect x="71" y="7" width="10" height="9.500"/><rect x="67.500" y="7" width="2" height="9.500"/></g></svg>
<svg class="a" style="left:909px;top:303px" width="31" height="22" viewBox="0 0 31 22">
<defs><linearGradient id="tr" x1="0" x2="1"><stop offset="0" stop-color="#fdd"/><stop offset=".6" stop-color="#e00"/><stop offset="1" stop-color="#c00"/></linearGradient><linearGradient id="tg" x1="0" x2="1"><stop offset="0" stop-color="#dfd"/><stop offset=".6" stop-color="#0d0"/><stop offset="1" stop-color="#0b0"/></linearGradient><linearGradient id="tbl" x1="0" x2="1"><stop offset="0" stop-color="#ddf"/><stop offset=".6" stop-color="#00e"/><stop offset="1" stop-color="#00b"/></linearGradient></defs>
<rect x="7" y="4.500" width="16" height="3.300" rx="1" fill="url(#tr)"/><rect x="7" y="9.800" width="16" height="3.300" rx="1" fill="url(#tg)"/><rect x="7" y="15" width="16" height="3.300" rx="1" fill="url(#tbl)"/>
<g fill="#6a7a8a"><circle cx="5.500" cy="9" r=".9"/><circle cx="5.500" cy="14.300" r=".9"/><circle cx="5.500" cy="19.500" r=".9"/></g></svg>
<svg class="a" style="left:909px;top:443px" width="31" height="22" viewBox="0 0 31 22"><path d="M13.500 1l2.300 8v5.500h-4.600v-5.500z" fill="#555" stroke="#333" stroke-width=".6"/><path d="M13.500 1v13" stroke="#ccc" stroke-width=".7"/><path d="M11 14.500h5l1.200 5.500h-7.400z" fill="#4a8eae"/></svg>
<svg class="a" style="left:909px;top:565px" width="31" height="24" viewBox="0 0 31 24"><defs><linearGradient id="bsh" x1="0" x2="1"><stop offset="0" stop-color="#222"/><stop offset="1" stop-color="#222" stop-opacity="0"/></linearGradient></defs>
<path d="M20.500 4l-10 11" stroke="#666" stroke-width="4"/><path d="M19 7l-7 8" stroke="#eee" stroke-width="1.800"/><path d="M21.500 3l-3 3.500" stroke="#444" stroke-width="4"/>
<path d="M8 13c-2 1-3.500 3-2.500 5.500l7 .5c1-1.500 0-3-1-4.500z" fill="#fafafa" stroke="#333" stroke-width=".9"/>
<ellipse cx="10" cy="19.500" rx="5" ry="2.300" fill="#1a1a1a"/><rect x="12" y="18" width="13" height="3.500" fill="url(#bsh)"/></svg>
<svg class="a" style="left:909px;top:644px" width="31" height="24" viewBox="0 0 31 24">
<g stroke="#444" stroke-width=".6"><path d="M7 6l1.800 6v4h-3.600v-4z" fill="#999"/><path d="M13.300 2.500l2 7.500v6h-4v-6z" fill="#555"/><path d="M19.800 5l1.800 6.500v4.500h-3.600v-4.500z" fill="#888"/></g>
<rect x="4.800" y="16" width="4.400" height="4.800" fill="#c85a1e"/><rect x="11" y="16" width="4.600" height="4.800" fill="#3a8acc"/><rect x="17.600" y="16" width="4.400" height="4.800" fill="#3a8a1e"/></svg>
<svg class="a" style="left:909px;top:787px" width="31" height="24" viewBox="0 0 31 24">
<path d="M7.500 2.500l2 8v5.500h-4v-5.500z" fill="#666" stroke="#333" stroke-width=".6"/><path d="M7.500 3v13" stroke="#ccc" stroke-width=".7"/><path d="M5 16h5l1 4.500h-7z" fill="#2a9acc"/>
<g transform="translate(17.300 11)"><circle r="4.300" fill="#808084"/><g stroke="#808084" stroke-width="2.200"><path d="M0-6v12M-6 0h12M-4.200-4.200l8.400 8.400M4.200-4.200l-8.400 8.400"/></g><circle r="1.800" fill="#d8d8dc"/></g></svg>
<svg class="a" style="left:1111px;top:69px" width="62" height="22" viewBox="0 0 62 22">
<rect x="10.500" y="9" width="11" height="8.500" fill="#f8f8f8" stroke="#555" stroke-width="1.200"/><rect x="6.300" y="6.300" width="11.500" height="8" fill="#fff" stroke="#c81414" stroke-width="1.500"/>
<g fill="none" stroke="#a4a4a8"><rect x="38.500" y="4.500" width="14" height="11" stroke-width="1.200" fill="#dcdce0"/><path d="M38 5h15" stroke-width="2.400"/><path d="M41 14l3-2.500 2 1.500" stroke-width="1"/></g></svg>
<svg class="a" style="left:1111px;top:237px" width="62" height="22" viewBox="0 0 62 22">
<path d="M6 11.500c2.500 0 4 .8 5.500 2.500c2.500-4.500 6.500-8.500 11.500-11c-5 4-8 8.500-10.500 14l-2 .3c-1-2.500-2.500-4.300-4.500-5.800z" fill="#d40a14"/><rect x="5" y="15.500" width="16.500" height="3.300" fill="#111"/>
<g fill="none" stroke="#a8a8ac" stroke-width="1.200"><path d="M37 5l6-2 6 2-6 2zM37 8.500l6 2 6-2M37 11.500l6 2 6-2"/><path d="M44 12h8v5h-8z" fill="#d4d4d8"/></g></svg>
<svg class="a" style="left:1111px;top:303px" width="62" height="22" viewBox="0 0 62 22">
<g fill="#fafafa" stroke="#333" stroke-width="1.100"><path d="M6 14.500l8-2.500 8 2.500-8 2.500z"/><path d="M6 10.500l8-2.500 8 2.500-8 2.500z"/><path d="M6 6.500l8-2.500 8 2.500-8 2.500z"/></g>
<g fill="none" stroke="#8e8e92" stroke-width="2"><path d="M41 6c-2.500 2-3.500 5-2 7.500s5 2.500 7-.5M45 5c3 1.500 5 4 4.500 7.500"/><path d="M44 3v6" /></g><rect x="46" y="1.500" width="7" height="6" fill="#9a9a9e"/></svg>
<div id="bottomline" class="a"></div>
<div id="lborder" class="a"></div>
</body>
</html>
